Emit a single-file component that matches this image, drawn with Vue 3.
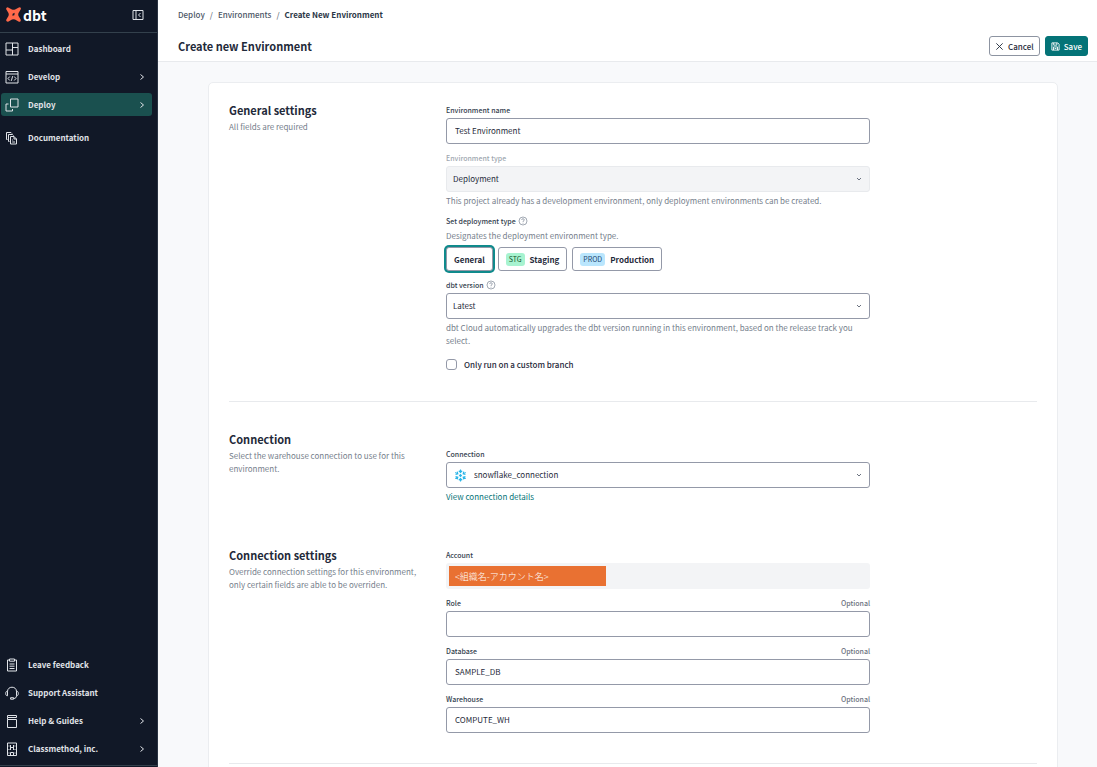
<script setup>
import { ref } from 'vue'

const mainNav = [
  { label: 'Dashboard', icon: 'dashboard' },
  { label: 'Develop', icon: 'develop', more: true },
  { label: 'Deploy', icon: 'deploy', more: true, active: true },
  { label: 'Documentation', icon: 'docs', spaced: true },
]
const footNav = [
  { label: 'Leave feedback', icon: 'clipboard' },
  { label: 'Support Assistant', icon: 'headset' },
  { label: 'Help & Guides', icon: 'book', more: true },
  { label: 'Classmethod, inc.', icon: 'building', more: true },
]
const icons = {
  dashboard: 'M1 1h12v12H1zM7.500 1v12M1 8h6.500M7.500 5.500H13',
  develop: 'M1 1.500h12v11.500H1zM1 4h12M4.800 6.500 3 8.500l1.800 2M9.200 6.500 11 8.500l-1.800 2M7.600 6.200 6.400 10.800',
  deploy: 'M5.500 1H13v8H5.500zM3.500 6H1v7h6.500v-2',
  docs: 'M2.500 8.500h-1v-7h4.500l1 1M4.500 10.500h-1v-7h4l1 1M5.500 5.500h3.500l2.500 2.500v5h-6zM9 5.500v2.500h2.500M7.200 9h1M7.200 11h2.800',
  clipboard: 'M4.500 2H2.500v11h9V2h-2M4.500 1h5v2.200h-5zM4.500 6h5M4.500 8.200h5M4.500 10.500h5',
  headset: 'M2.500 5.500C2.500 2.800 4.500 1.200 7 1.200s4.500 1.600 4.500 4.300M2.500 5.200v4.600C1.300 9.800.7 9 .7 7.500s.6-2.300 1.800-2.300zM11.500 5.200v4.600c1.200 0 1.800-.8 1.800-2.300s-.6-2.300-1.800-2.300zM11.500 9.800c0 1.600-1 2.700-2.700 2.700M5.600 11.700h3v1.500h-3z',
  book: 'M2.500 1.500h9v2h-9zM2.500 5.500h9v8h-9zM2.500 3.500v2',
  building: 'M2.500 1h9v12.500h-9zM5.500 3v5M8.500 3v5M5.500 5.500h3M5.500 13v-2.500h3V13M4 3.500v1M10 3.500v1M4 7v1M10 7v1M4 10.500v1M10 10.500v1',
}

const stages = [
  { id: 'general', label: 'General' },
  { id: 'staging', label: 'Staging', tag: 'STG' },
  { id: 'production', label: 'Production', tag: 'PROD' },
]
const stage = ref('general')
const envName = ref('Test Environment')
const customBranch = ref(false)
const overrides = ref([
  { id: 'role', label: 'Role', value: '' },
  { id: 'database', label: 'Database', value: 'SAMPLE_DB' },
  { id: 'warehouse', label: 'Warehouse', value: 'COMPUTE_WH' },
])
</script>

<template>
  <div class="app">
    <aside class="sidebar">
      <div class="brand">
        <a href="#" class="logo" aria-label="dbt home">
          <svg class="mark" viewBox="0 0 16 16" aria-hidden="true">
            <path fill="#ff694a" fill-rule="evenodd" d="M2.300.4 6.300 2.600Q8 3.400 9.700 2.600L13.700.4Q15-.1 15.700.9 16.200 1.700 15.600 2.700L13.400 6.500Q12.700 8 13.400 9.500L15.600 13.300Q16.100 14.500 15.200 15.400 14.400 16 13.300 15.500L9.600 13.400Q8 12.700 6.400 13.400L2.700 15.500Q1.600 16 .7 15.300-.1 14.400.4 13.300L2.600 9.500Q3.300 8 2.600 6.500L.4 2.700Q-.2 1.600.6.700 1.300 0 2.300.4ZM9.200 6.200 7.100 7.100 6.800 9.400 8.900 8.900Z" />
          </svg>
          <span>dbt</span>
        </a>
        <button class="collapse" type="button" aria-label="Collapse menu">
          <svg viewBox="0 0 12 12"><path d="M1 1.500h10v9H1zM4 1.500v9M8.500 4l-2 2 2 2" /></svg>
        </button>
      </div>
      <nav class="nav">
        <a v-for="item in mainNav" :key="item.label" href="#" class="item" :class="{ active: item.active, spaced: item.spaced }">
          <svg class="icon" viewBox="0 0 14 14"><path :d="icons[item.icon]" /></svg>
          <span>{{ item.label }}</span>
          <svg v-if="item.more" class="more" viewBox="0 0 6 8"><path d="M1.500 1.500 4.500 4l-3 2.500" /></svg>
        </a>
      </nav>
      <nav class="nav foot">
        <a v-for="item in footNav" :key="item.label" href="#" class="item">
          <svg class="icon" viewBox="0 0 14 14"><path :d="icons[item.icon]" /></svg>
          <span>{{ item.label }}</span>
          <svg v-if="item.more" class="more" viewBox="0 0 6 8"><path d="M1.500 1.500 4.500 4l-3 2.500" /></svg>
        </a>
      </nav>
    </aside>

    <div class="page">
      <header class="header">
        <nav class="crumbs" aria-label="Breadcrumb">
          <a href="#">Deploy</a><i>/</i><a href="#">Environments</a><i>/</i><b>Create New Environment</b>
        </nav>
        <div class="titlebar">
          <h1>Create new Environment</h1>
          <div class="actions">
            <button type="button" class="btn">
              <svg viewBox="0 0 10 10"><path d="M1.500 1.500l7 7M8.500 1.500l-7 7" /></svg>Cancel
            </button>
            <button type="button" class="btn primary">
              <svg viewBox="0 0 10 10"><path d="M1 1h6.500L9 2.500V9H1zM3 1v2.500h3.500V1M2.800 9V5.500h4.400V9M4 7.200h2" /></svg>Save
            </button>
          </div>
        </div>
      </header>

      <main class="content">
        <form class="card" @submit.prevent>
          <section class="section general">
            <div class="intro">
              <h2>General settings</h2>
              <p>All fields are required</p>
            </div>
            <div class="fields">
              <div class="field">
                <label for="name">Environment name</label>
                <input id="name" v-model="envName" class="control" type="text" />
              </div>
              <div class="field">
                <label for="type" class="muted">Environment type</label>
                <div class="select">
                  <select id="type" class="control" disabled><option>Deployment</option></select>
                  <svg viewBox="0 0 6 6"><path d="M1 2l2 2 2-2" /></svg>
                </div>
                <p class="help">This project already has a development environment, only deployment environments can be created.</p>
              </div>
              <div class="field">
                <div id="stage-label" class="label">
                  Set deployment type
                  <svg class="hint" viewBox="0 0 10 10"><circle cx="5" cy="5" r="4" /><path d="M3.700 4q0-1.300 1.300-1.300T6.300 4Q6.300 4.700 5 5.400V6M5 6.800v.8" /></svg>
                </div>
                <p class="help above">Designates the deployment environment type.</p>
                <div class="stages" role="group" aria-labelledby="stage-label">
                  <button v-for="s in stages" :key="s.id" type="button" class="stage" :class="{ chosen: stage === s.id }" :aria-pressed="stage === s.id" @click="stage = s.id">
                    <span v-if="s.tag" class="tag" :class="s.id">{{ s.tag }}</span>{{ s.label }}
                  </button>
                </div>
              </div>
              <div class="field">
                <label for="version">
                  dbt version
                  <svg class="hint" viewBox="0 0 10 10"><circle cx="5" cy="5" r="4" /><path d="M3.700 4q0-1.300 1.300-1.300T6.300 4Q6.300 4.700 5 5.400V6M5 6.800v.8" /></svg>
                </label>
                <div class="select">
                  <select id="version" class="control"><option>Latest</option></select>
                  <svg viewBox="0 0 6 6"><path d="M1 2l2 2 2-2" /></svg>
                </div>
                <p class="help">dbt Cloud automatically upgrades the dbt version running in this environment, based on the release track you select.</p>
              </div>
              <label class="check">
                <input v-model="customBranch" type="checkbox" />Only run on a custom branch
              </label>
            </div>
          </section>

          <section class="section connection">
            <div class="intro">
              <h2>Connection</h2>
              <p>Select the warehouse connection to use for this environment.</p>
            </div>
            <div class="fields">
              <div class="field">
                <label for="connection">Connection</label>
                <div class="select with-logo">
                  <svg class="flake" viewBox="0 0 14 14" aria-hidden="true">
                    <g v-for="n in 6" :key="n" :transform="`rotate(${n * 60} 7 7)`">
                      <path d="M7 .5v3M5.200 1.900 7 3.700l1.800-1.800" />
                    </g>
                    <path d="M7 6 8 7 7 8 6 7z" />
                  </svg>
                  <select id="connection" class="control"><option>snowflake_connection</option></select>
                  <svg viewBox="0 0 6 6"><path d="M1 2l2 2 2-2" /></svg>
                </div>
                <a href="#" class="link">View connection details</a>
              </div>
            </div>
          </section>

          <section class="section">
            <div class="intro">
              <h2>Connection settings</h2>
              <p>Override connection settings for this environment, only certain fields are able to be overriden.</p>
            </div>
            <div class="fields">
              <div class="field">
                <label for="account">Account</label>
                <div class="account">
                  <input id="account" type="text" value="<組織名-アカウント名>" readonly />
                </div>
              </div>
              <div v-for="o in overrides" :key="o.id" class="field">
                <div class="split"><label :for="o.id">{{ o.label }}</label><span>Optional</span></div>
                <input :id="o.id" v-model="o.value" class="control" type="text" />
              </div>
            </div>
          </section>
        </form>
      </main>
    </div>
  </div>
</template>

<style>
html,
body,
#app {
  height: 100%;
}
body {
  margin: 0;
  overflow: hidden;
}
</style>

<style scoped>
.app,
.app * {
  box-sizing: border-box;
}
.app {
  display: flex;
  height: 100%;
  font-family: "Noto Sans CJK JP", "Noto Sans", sans-serif;
  font-size: 8px;
  line-height: 13px;
  color: #1f2a3a;
  background: #f8f9fb;
}
h1, h2, p {
  margin: 0;
}
a {
  color: inherit;
  text-decoration: none;
}
button, input, select {
  font: inherit;
  color: inherit;
  margin: 0;
}
svg {
  flex: none;
  fill: none;
  stroke: currentColor;
}

.sidebar {
  display: flex;
  flex-direction: column;
  flex: none;
  width: 158px;
  padding-bottom: 1px;
  color: #e0e3e8;
  background: #111827;
  border-right: 1px solid #2a3342;
}
.brand {
  display: flex;
  align-items: center;
  justify-content: space-between;
  height: 33px;
  padding: 0 13px 3px 6px;
  border-bottom: 1px solid #33404c;
}
.logo {
  display: flex;
  align-items: center;
  gap: 2px;
  color: #fff;
  font-size: 14px;
  font-weight: 700;
  line-height: 16px;
}
.mark {
  width: 15px;
  height: 15px;
  stroke: none;
}
.collapse {
  display: flex;
  padding: 0;
  border: 0;
  background: none;
}
.collapse svg {
  width: 12px;
  height: 12px;
}
.nav {
  display: flex;
  flex-direction: column;
  gap: 5px;
  padding: 4px 5px 0 1px;
}
.foot {
  margin-top: auto;
  padding-bottom: 5px;
  border-bottom: 1px solid #33404c;
}
.item {
  display: flex;
  align-items: center;
  gap: 9px;
  height: 23px;
  padding: 0 7px 0 4px;
  border-radius: 3px;
  font-weight: 700;
}
.item.active {
  background: #1a504f;
}
.item.spaced {
  margin-top: 5px;
}
.icon {
  width: 14px;
  height: 14px;
}
.more {
  width: 6px;
  height: 8px;
  margin-left: auto;
}

.page {
  display: flex;
  flex-direction: column;
  flex: 1;
  min-width: 0;
}
.header {
  flex: none;
  padding: 8px 9px 5px 20px;
  background: #fff;
  border-bottom: 1px solid #e8eaed;
}
.crumbs {
  display: flex;
  gap: 5px;
  font-weight: 500;
  color: #4b5565;
}
.crumbs i {
  color: #6b7280;
  font-style: normal;
}
.crumbs b {
  font-weight: 700;
  color: #2b3646;
}
.titlebar {
  display: flex;
  align-items: center;
  justify-content: space-between;
  margin-top: 15px;
}
h1 {
  font-size: 11px;
  line-height: 18px;
}
.actions {
  display: flex;
  gap: 5px;
}
.btn {
  display: flex;
  align-items: center;
  gap: 4px;
  height: 20px;
  padding: 0 5px;
  border: 1px solid #8d94a1;
  border-radius: 3px;
  background: #fff;
  font-weight: 500;
}
.btn svg {
  width: 9px;
  height: 9px;
}
.primary {
  color: #fff;
  border-color: #047377;
  background: #047377;
}

.content {
  flex: 1;
  min-height: 0;
  padding: 20px 39px 0 50px;
  overflow: hidden;
}
.card {
  padding: 18px 20px 30px;
  background: #fff;
  border: 1px solid #ebedf0;
  border-radius: 5px;
}
.section {
  display: grid;
  grid-template-columns: 217fr 424fr 167fr;
  padding-bottom: 30px;
  border-bottom: 1px solid #e8eaed;
}
.section.general {
  margin-bottom: 28px;
}
.section.connection {
  padding-bottom: 43px;
  border-bottom: 0;
}
.intro {
  padding-right: 28px;
}
h2 {
  font-size: 11px;
  line-height: 18px;
}
.intro p {
  margin-top: 1px;
  color: #76808c;
}
.fields {
  display: flex;
  flex-direction: column;
  gap: 8px;
  padding-top: 3px;
}
.connection .fields {
  padding-top: 18px;
}
.field {
  display: flex;
  flex-direction: column;
}
.field label,
.label,
.split {
  display: flex;
  align-items: center;
  gap: 2px;
  height: 12px;
  margin-bottom: 2px;
  font-size: 7px;
  font-weight: 500;
  color: #333e4e;
}
.field label.muted {
  color: #a0a8b0;
}
.split {
  justify-content: space-between;
}
.field .split label {
  margin: 0;
}
.split span {
  color: #6b7280;
}
.hint {
  width: 10px;
  height: 10px;
  color: #7b8593;
}
.hint * {
  stroke-width: 0.7;
}
.control {
  display: block;
  width: 100%;
  height: 26px;
  padding: 0 8px 2px;
  border: 1px solid #9499a8;
  border-radius: 3px;
  background: #fff;
  appearance: none;
  outline: none;
}
.select {
  position: relative;
}
.select .control {
  padding: 0 20px 2px 6px;
}
.select .control:disabled {
  opacity: 1;
  border-color: #e8eaed;
  background: #f3f4f6;
}
.select svg:last-child {
  position: absolute;
  top: 10px;
  right: 8px;
  width: 6px;
  height: 6px;
  color: #6b7280;
  pointer-events: none;
}
.select.with-logo .control {
  padding-left: 27px;
}
.flake {
  position: absolute;
  top: 7px;
  left: 8px;
  width: 13px;
  height: 13px;
  color: #29b5e8;
  stroke-width: 1.2;
}
.help {
  margin-top: 2px;
  color: #76808c;
}
.help.above {
  margin: 0 0 5px;
}
.stages {
  display: flex;
  gap: 5px;
}
.stage {
  display: flex;
  align-items: center;
  gap: 5px;
  height: 24px;
  padding: 0 7px;
  border: 1px solid #9499a8;
  border-radius: 3px;
  background: #fff;
  font-weight: 700;
}
.stage.chosen {
  box-shadow: 0 0 0 2px #0f8a8c;
}
.tag {
  padding: 0 3px;
  border-radius: 3px;
  font-weight: 400;
  font-size: 7px;
}
.tag.staging {
  color: #14532d;
  background: #a7f3d0;
}
.tag.production {
  color: #1e4670;
  background: #bae6fd;
}
.check {
  display: flex;
  align-items: center;
  gap: 7px;
  margin-top: 3px;
  font-weight: 500;
}
.check input {
  width: 11px;
  height: 11px;
  border: 1px solid #9499a8;
  border-radius: 3px;
  background: #fff;
  appearance: none;
}
.check input:checked {
  background: #047377;
}
.link {
  align-self: flex-start;
  margin-top: 2px;
  color: #047377;
}
.account {
  height: 26px;
  padding: 3px;
  border-radius: 3px;
  background: #f3f4f6;
}
.account input {
  display: block;
  width: 157px;
  height: 20px;
  padding: 0 6px;
  border: 0;
  border-radius: 0;
  outline: none;
  color: #fff;
  background: #e97132;
  font-size: 9px;
  font-weight: 300;
}
</style>
